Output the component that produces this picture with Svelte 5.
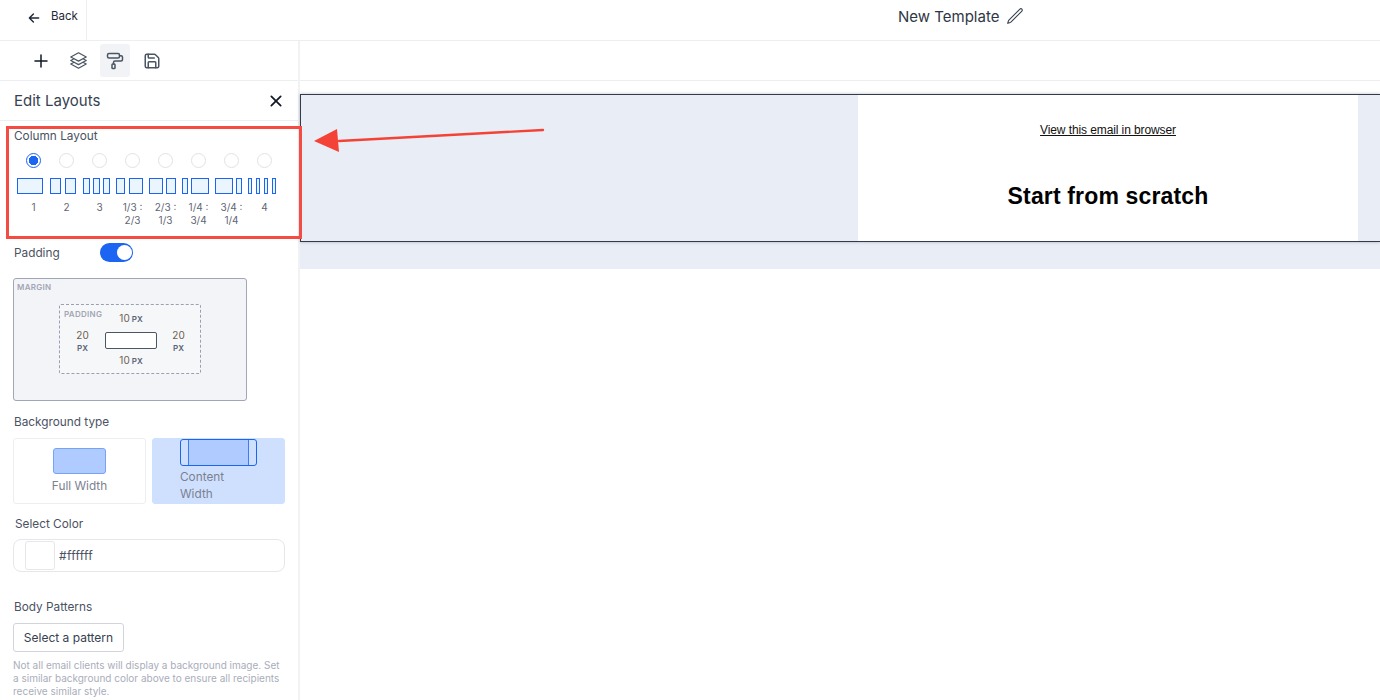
<script>
  const layouts = [
    { label: ['1'], cols: [26], gap: 0 },
    { label: ['2'], cols: [11, 11], gap: 4 },
    { label: ['3'], cols: [7, 7, 7], gap: 3 },
    { label: ['1/3 :', '2/3'], cols: [9, 14], gap: 4 },
    { label: ['2/3 :', '1/3'], cols: [14, 10], gap: 3 },
    { label: ['1/4 :', '3/4'], cols: [6, 18], gap: 3 },
    { label: ['3/4 :', '1/4'], cols: [18, 6], gap: 3 },
    { label: ['4'], cols: [4, 4, 4, 4], gap: 4 }
  ];
  let selected = 0;
</script>

<div class="page">
  <header class="topbar">
    <div class="back">
      <svg width="14" height="14" viewBox="0 0 24 24" fill="none" stroke="#1f2937" stroke-width="2.4" stroke-linecap="round" stroke-linejoin="round"><path d="M20 12H4M11 5l-7 7 7 7" /></svg>
      <span>Back</span>
    </div>
    <div class="title">
      <span>New Template</span>
      <svg width="18" height="18" viewBox="0 0 24 24" fill="none" stroke="#374151" stroke-width="1.5" stroke-linecap="round" stroke-linejoin="round"><path d="M16.862 4.487l1.687-1.688a1.875 1.875 0 112.652 2.652L6.832 19.82a4.5 4.5 0 01-1.897 1.13l-2.685.8.8-2.685a4.5 4.5 0 011.13-1.897L16.863 4.487z" /></svg>
    </div>
  </header>

  <div class="main">
    <aside class="side">
      <div class="tools">
        <div class="tool">
          <svg width="18" height="18" viewBox="0 0 24 24" fill="none" stroke="#111827" stroke-width="2" stroke-linecap="round"><path d="M12 4v16M4 12h16" /></svg>
        </div>
        <div class="tool">
          <svg width="19" height="19" viewBox="0 0 24 24" fill="none" stroke="#4b5563" stroke-width="1.6" stroke-linecap="round" stroke-linejoin="round"><path d="M6.429 9.75L2.25 12l4.179 2.25m0-4.5l5.571 3 5.571-3m-11.142 0L2.25 7.5 12 2.25l9.75 5.25-4.179 2.25m0 0L21.75 12l-4.179 2.25m0 0l4.179 2.25L12 21.75 2.25 16.5l4.179-2.25m11.142 0l-5.571 3-5.571-3" /></svg>
        </div>
        <div class="tool active">
          <svg width="18" height="18" viewBox="0 0 24 24" fill="none" stroke="#4b5563" stroke-width="2" stroke-linecap="round" stroke-linejoin="round"><rect x="2" y="2" width="16" height="6" rx="2" /><path d="M10 16v-2a2 2 0 0 1 2-2h8a2 2 0 0 0 2-2V7a2 2 0 0 0-2-2h-2" /><rect x="8" y="16" width="4" height="6" rx="1" /></svg>
        </div>
        <div class="tool">
          <svg width="18" height="18" viewBox="0 0 24 24" fill="none" stroke="#4b5563" stroke-width="2" stroke-linecap="round" stroke-linejoin="round"><path d="M15.2 3a2 2 0 0 1 1.4.6l3.8 3.8a2 2 0 0 1 .6 1.4V19a2 2 0 0 1-2 2H5a2 2 0 0 1-2-2V5a2 2 0 0 1 2-2z" /><path d="M17 21v-7a1 1 0 0 0-1-1H8a1 1 0 0 0-1 1v7" /><path d="M7 3v4a1 1 0 0 0 1 1h7" /></svg>
        </div>
      </div>

      <div class="panel-head">
        <h2>Edit Layouts</h2>
        <svg width="16" height="16" viewBox="0 0 24 24" fill="none" stroke="#111827" stroke-width="2.6" stroke-linecap="round"><path d="M5 5l14 14M19 5L5 19" /></svg>
      </div>

      <div class="panel">
        <div class="label cl">Column Layout</div>
        <div class="layouts">
          {#each layouts as l, i}
            <div class="layout">
              <span class="radio" class:on={i === selected}></span>
              <div class="cols" style="gap: {l.gap}px">
                {#each l.cols as w}
                  <span class="col" style="width: {w}px"></span>
                {/each}
              </div>
              <div class="cap">
                {#each l.label as t}
                  <div>{t}</div>
                {/each}
              </div>
            </div>
          {/each}
        </div>

        <div class="pad-row">
          <span class="label">Padding</span>
          <span class="toggle"><span class="knob"></span></span>
        </div>

        <div class="margin-box">
          <span class="tag margin-tag">MARGIN</span>
          <div class="padding-box">
            <span class="tag padding-tag">PADDING</span>
            <div class="val top">10<small>PX</small></div>
            <div class="val left">20<small>PX</small></div>
            <div class="inner"></div>
            <div class="val right">20<small>PX</small></div>
            <div class="val bottom">10<small>PX</small></div>
          </div>
        </div>

        <div class="label bg-label">Background type</div>
        <div class="bg-cards">
          <div class="card">
            <span class="swatch-full"></span>
            <span class="card-text center">Full Width</span>
          </div>
          <div class="card sel">
            <span class="swatch-content"><span></span></span>
            <span class="card-text">Content<br />Width</span>
          </div>
        </div>

        <div class="label color-label">Select Color</div>
        <div class="color-input">
          <span class="color-chip"></span>
          <span class="hex">#ffffff</span>
        </div>

        <div class="label pat-label">Body Patterns</div>
        <button class="pat-btn">Select a pattern</button>
        <p class="hint">Not all email clients will display a background image. Set a similar background color above to ensure all recipients receive similar style.</p>
      </div>
    </aside>

    <section class="canvas">
      <div class="canvas-bar"></div>
      <div class="band">
        <div class="row">
          <div class="content">
            <a href="#top">View this email in browser</a>
            <h1>Start from scratch</h1>
          </div>
        </div>
      </div>
    </section>
  </div>

  <div class="redbox"></div>
  <svg class="arrow" width="240" height="30" viewBox="0 0 240 30">
    <path d="M233 3 L29 14" stroke="#f44336" stroke-width="2.4" stroke-linecap="round" fill="none" />
    <path d="M4 14 L27 2 L29 25 Z" fill="#f44336" />
  </svg>
</div>

<style>
  :global(body) {
    margin: 0;
    background: #fff;
  }
  .page {
    position: relative;
    width: 1380px;
    height: 700px;
    overflow: hidden;
    font-family: Inter, "Noto Sans", sans-serif;
    color: #374151;
  }
  .topbar {
    display: flex;
    height: 40px;
    border-bottom: 1px solid #eceef1;
  }
  .back {
    box-sizing: border-box;
    width: 87px;
    padding: 0 0 6px 27px;
    display: flex;
    align-items: center;
    gap: 10px;
    border-right: 1px solid #eceef1;
    font-size: 11.5px;
    color: #1f2937;
  }
  .back svg {
    margin-top: 2px;
  }
  .back span {
    position: relative;
    top: -1px;
  }
  .title {
    margin-left: 811px;
    padding-bottom: 8px;
    display: flex;
    align-items: center;
    gap: 7px;
    font-size: 15px;
    color: #2f3745;
  }
  .main {
    display: flex;
    height: 659px;
  }
  .side {
    box-sizing: border-box;
    width: 300px;
    flex: none;
    border-right: 2px solid #f1f2f4;
  }
  .tools {
    display: flex;
    gap: 7px;
    height: 39px;
    padding-left: 26px;
    align-items: center;
    border-bottom: 1px solid #eceef1;
  }
  .tool {
    width: 30px;
    height: 33px;
    border-radius: 3px;
    display: flex;
    align-items: center;
    justify-content: center;
  }
  .tool.active {
    background: #f2f3f7;
  }
  .panel-head {
    box-sizing: border-box;
    height: 40px;
    padding: 0 14px 0 14px;
    display: flex;
    align-items: center;
    justify-content: space-between;
    border-bottom: 1px solid #eceef1;
  }
  h2 {
    margin: 0;
    font-size: 15px;
    font-weight: 400;
    color: #374151;
  }
  .panel {
    padding: 0 0 0 13px;
  }
  .label {
    font-size: 11.8px;
    line-height: 16px;
    color: #4a5263;
    font-weight: 400;
  }
  .cl {
    padding: 7px 0 0 1px;
  }
  .layouts {
    display: flex;
    margin-top: 9px;
    padding-left: 4px;
  }
  .layout {
    width: 33px;
    display: flex;
    flex-direction: column;
    align-items: flex-start;
  }
  .radio {
    box-sizing: border-box;
    display: block;
    width: 15px;
    height: 15px;
    margin-left: 9px;
    border-radius: 50%;
    border: 1px solid #dfe2e7;
    background: #fff;
  }
  .radio.on {
    border-color: #1c64f2;
    background: radial-gradient(circle, #1c64f2 0 4.5px, #fff 5px);
  }
  .cols {
    display: flex;
    margin-top: 10px;
    height: 16px;
  }
  .col {
    box-sizing: border-box;
    flex: none;
    height: 16px;
    border: 1px solid #1c64f2;
    background: #ebf5fd;
  }
  .cap {
    width: 33px;
    margin-top: 7px;
    font-size: 10px;
    line-height: 13px;
    color: #5f6675;
    text-align: center;
    white-space: nowrap;
    height: 26px;
  }
  .pad-row {
    display: flex;
    align-items: center;
    height: 19px;
    margin-top: 16px;
    padding-left: 1px;
  }
  .pad-row .label {
    width: 86px;
  }
  .toggle {
    position: relative;
    width: 33px;
    height: 19px;
    border-radius: 10px;
    background: #1c64f2;
  }
  .knob {
    position: absolute;
    right: 1px;
    top: 2px;
    width: 15px;
    height: 15px;
    border-radius: 50%;
    background: #fff;
  }
  .margin-box {
    position: relative;
    box-sizing: border-box;
    width: 234px;
    height: 123px;
    margin-top: 16px;
    padding: 25px 0 0 45px;
    background: #f3f4f8;
    border: 1px solid #a0a6b8;
    border-radius: 3px;
  }
  .padding-box {
    position: relative;
    box-sizing: border-box;
    width: 142px;
    height: 70px;
    border: 1px dashed #9aa0b0;
    border-radius: 2px;
    background: #f6f7f9;
    display: grid;
    grid-template-columns: 45px 52px 43px;
    grid-template-rows: 27px 17px 24px;
    align-items: center;
    justify-items: center;
  }
  .tag {
    position: absolute;
    font-size: 8px;
    font-weight: 600;
    color: #a2a6b4;
    letter-spacing: 0.3px;
  }
  .margin-tag {
    left: 3px;
    top: 3px;
  }
  .padding-tag {
    left: 4px;
    top: 4px;
  }
  .val {
    font-size: 10px;
    color: #6b5f50;
    line-height: 13px;
    text-align: center;
  }
  .val small {
    font-size: 8px;
    font-weight: 600;
    color: #5a6478;
    margin-left: 2px;
  }
  .val.top {
    grid-column: 2;
    grid-row: 1;
    white-space: nowrap;
    padding-top: 1px;
  }
  .val.left {
    grid-column: 1;
    grid-row: 2;
    width: 20px;
    padding-top: 2px;
  }
  .val.right {
    grid-column: 3;
    grid-row: 2;
    width: 20px;
    padding-top: 2px;
  }
  .val.left small,
  .val.right small {
    display: block;
    margin: 0;
  }
  .inner {
    box-sizing: border-box;
    grid-column: 2;
    grid-row: 2;
    width: 52px;
    height: 17px;
    background: #fff;
    border: 1px solid #4b5563;
    border-radius: 2px;
  }
  .val.bottom {
    grid-column: 2;
    grid-row: 3;
    white-space: nowrap;
  }
  .bg-label {
    margin-top: 13px;
    padding-left: 1px;
  }
  .bg-cards {
    display: flex;
    gap: 6px;
    margin-top: 8px;
  }
  .card {
    box-sizing: border-box;
    width: 133px;
    height: 66px;
    border: 1px solid #eceef1;
    border-radius: 3px;
    display: flex;
    flex-direction: column;
    align-items: center;
    padding-top: 9px;
  }
  .card.sel {
    background: #cfe0ff;
    border-color: #cfe0ff;
    align-items: flex-start;
    padding: 0 0 0 27px;
  }
  .swatch-full {
    box-sizing: border-box;
    width: 53px;
    height: 26px;
    background: #afcbff;
    border: 1px solid #76a3f8;
    border-radius: 3px;
  }
  .swatch-content {
    box-sizing: border-box;
    width: 77px;
    height: 27px;
    border: 1px solid #1c64f2;
    border-radius: 3px;
    padding: 0 7px;
  }
  .swatch-content span {
    display: block;
    box-sizing: border-box;
    height: 100%;
    background: #afcbff;
    border-left: 1px solid #3f7cf4;
    border-right: 1px solid #3f7cf4;
  }
  .card-text {
    font-size: 11.8px;
    line-height: 17px;
    color: #7b8091;
    margin-top: 3px;
  }
  .card-text.center {
    margin-top: 4px;
  }
  .color-label {
    margin-top: 12px;
    padding-left: 2px;
  }
  .color-input {
    box-sizing: border-box;
    width: 272px;
    height: 33px;
    margin-top: 7px;
    padding-left: 11px;
    display: flex;
    align-items: center;
    gap: 4px;
    border: 1px solid #e5e7eb;
    border-radius: 8px;
    font-size: 12px;
    color: #4a5263;
  }
  .hex {
    letter-spacing: 0.3px;
  }
  .color-chip {
    box-sizing: border-box;
    width: 30px;
    height: 29px;
    border: 1px solid #e5e7eb;
    border-radius: 3px;
  }
  .pat-label {
    margin-top: 27px;
    padding-left: 1px;
  }
  .pat-btn {
    box-sizing: border-box;
    display: block;
    width: 111px;
    height: 29px;
    margin-top: 8px;
    padding: 0;
    background: #fff;
    border: 1px solid #d1d5db;
    border-radius: 3px;
    font-family: inherit;
    font-size: 12px;
    color: #374151;
  }
  .hint {
    width: 270px;
    margin: 7px 0 0;
    font-size: 10px;
    line-height: 13px;
    color: #a9adba;
  }
  .canvas {
    flex: 1;
    min-width: 0;
  }
  .canvas-bar {
    height: 39px;
    border-bottom: 1px solid #eceef1;
  }
  .band {
    margin-top: 13px;
    height: 175px;
    background: #e9edf5;
  }
  .row {
    box-sizing: border-box;
    height: 148px;
    border: 1px solid #333b4b;
    border-right: 0;
    box-shadow: 0 0 3px rgba(51, 59, 75, 0.35);
    padding-left: 557px;
  }
  .content {
    width: 500px;
    height: 146px;
    background: #fff;
    text-align: center;
    font-family: "Liberation Sans", Arial, sans-serif;
    color: #000;
    overflow: hidden;
  }
  .content a {
    display: block;
    margin-top: 28px;
    font-size: 12px;
    line-height: 15px;
    letter-spacing: -0.1px;
    color: #111;
    text-decoration: underline;
  }
  h1 {
    margin: 43px 0 0;
    font-size: 23px;
    line-height: 30px;
    font-weight: 700;
    letter-spacing: 0.15px;
  }
  .redbox {
    position: absolute;
    left: 6px;
    top: 126px;
    box-sizing: border-box;
    width: 296px;
    height: 113px;
    border: 3px solid #f44c42;
    pointer-events: none;
  }
  .arrow {
    position: absolute;
    left: 310px;
    top: 127px;
    pointer-events: none;
  }
</style>
